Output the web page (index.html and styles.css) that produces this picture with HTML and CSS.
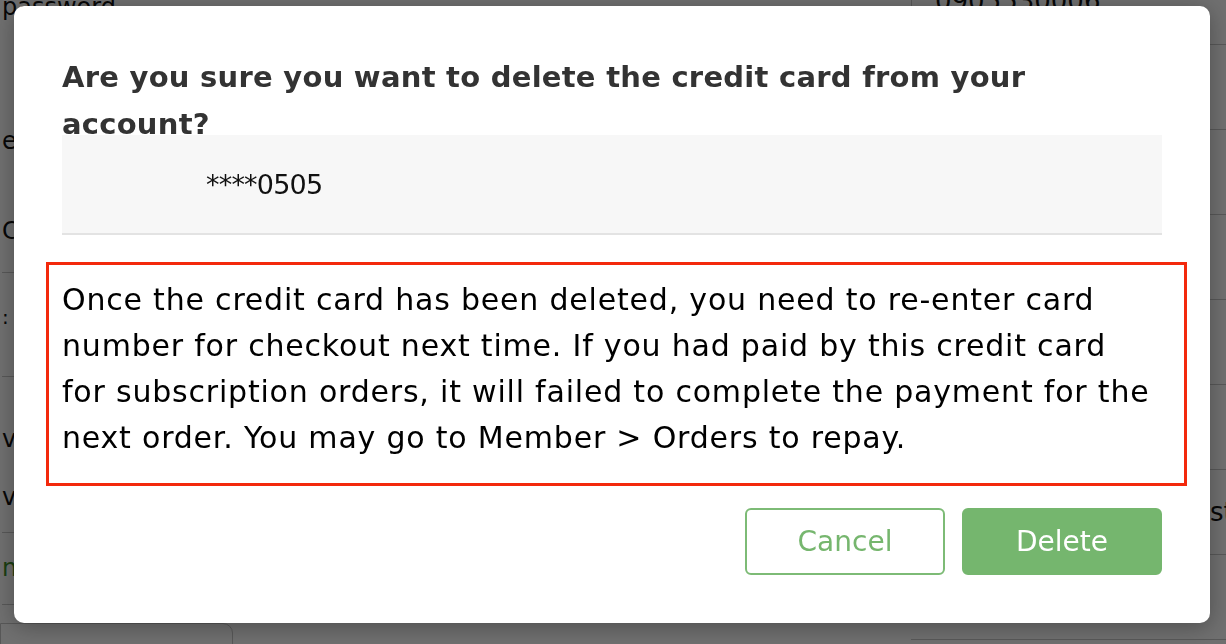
FILE: index.html
```html
<!DOCTYPE html>
<html lang="en">
<head>
<meta charset="utf-8">
<title>Delete credit card</title>
<link rel="stylesheet" href="styles.css">
</head>
<body>
<div class="page">
  <div class="col-left">
    <div class="lblock block-a">
      <div class="ltext">password</div>
      <div class="ltext gap-1">email</div>
      <div class="ltext gap-2">Card</div>
    </div>
    <div class="lblock block-b">
      <div class="ltext small">:</div>
    </div>
    <div class="lblock block-c">
      <div class="ltext">visa</div>
      <div class="ltext gap-3">visa</div>
    </div>
    <div class="lblock block-d">
      <div class="ltext green">new</div>
    </div>
    <div class="lbox"></div>
  </div>
  <div class="col-right">
    <div class="rtop"><span class="phone">0905530006</span></div>
    <div class="rrow"></div>
    <div class="rrow"></div>
    <div class="rrow"></div>
    <div class="rrow"></div>
    <div class="rrow"></div>
    <div class="rrow status-row"><span class="status">status</span></div>
    <div class="rrow"></div>
  </div>
</div>

<div class="overlay">
  <div class="modal">
    <h2 class="modal-title">Are you sure you want to delete the credit card from your account?</h2>
    <div class="card-row">
      <span class="card-num">****0505</span>
    </div>
    <div class="notice">
      <p>Once the credit card has been deleted, you need to re-enter card number for checkout next time. If you had paid by this credit card for subscription orders, it will failed to complete the payment for the next order. You may go to Member &gt; Orders to repay.</p>
    </div>
    <div class="actions">
      <button class="btn btn-outline">Cancel</button>
      <button class="btn btn-primary">Delete</button>
    </div>
  </div>
</div>
</body>
</html>
```

FILE: styles.css
```css
* {
  box-sizing: border-box;
}

html, body {
  margin: 0;
  padding: 0;
}

body {
  width: 1226px;
  height: 644px;
  overflow: hidden;
  background: #ffffff;
  font-family: "DejaVu Sans", "Noto Sans", sans-serif;
  color: #222;
}

/* ---------- background page ---------- */
.page {
  display: flex;
  width: 1226px;
  height: 644px;
  overflow: hidden;
}

.col-left {
  width: 911px;
  flex: none;
  padding-left: 2px;
}

.ltext {
  font-size: 24px;
  line-height: 30px;
  height: 30px;
  color: #111;
  white-space: nowrap;
}

.ltext.small {
  font-size: 20px;
}

.ltext.green {
  color: #3f8f2c;
}

.lblock {
  border-bottom: 1px solid #c8c8c8;
}

.block-a {
  margin-top: -8px;
  padding-bottom: 26px;
}

.gap-1 { margin-top: 104px; }
.gap-2 { margin-top: 60px; }
.gap-3 { margin-top: 28px; }

.block-b {
  padding-top: 29px;
  padding-bottom: 44px;
}

.block-c {
  padding-top: 47px;
  padding-bottom: 20px;
}

.block-d {
  padding-top: 20px;
  padding-bottom: 21px;
}

.lbox {
  margin-top: 18px;
  margin-left: -2px;
  width: 233px;
  height: 40px;
  border: 1px solid #c8c8c8;
  border-top-right-radius: 10px;
}

.col-right {
  flex: 1;
}

.rtop {
  display: flow-root;
  height: 45px;
  border-left: 1px solid #c8c8c8;
  border-bottom: 1px solid #c8c8c8;
  padding-left: 23px;
}

.phone {
  display: block;
  margin-top: -14px;
  font-size: 26px;
  line-height: 30px;
  color: #111;
}

.rrow {
  height: 85px;
  border-bottom: 1px solid #c8c8c8;
}

.status-row {
  display: flex;
  align-items: center;
  padding-left: 299px;
}

.status {
  font-size: 26px;
  color: #111;
  white-space: nowrap;
}

/* ---------- overlay + modal ---------- */
.overlay {
  position: fixed;
  inset: 0;
  background: rgba(0, 0, 0, 0.565);
  display: flex;
  justify-content: center;
  align-items: flex-start;
  padding-top: 6px;
}

.modal {
  width: 1196px;
  margin-right: 2px;
  background: #ffffff;
  border-radius: 10px;
  padding: 48px;
  box-shadow: 0 4px 22px rgba(0, 0, 0, 0.3);
}

.modal-title {
  margin: 0;
  font-size: 29px;
  font-weight: bold;
  line-height: 47px;
  letter-spacing: 0.25px;
  color: #333333;
}

.card-row {
  position: relative;
  margin-top: -13px;
  height: 100px;
  background: #f7f7f7;
  border-bottom: 2px solid #e3e3e3;
  display: flex;
  align-items: center;
  padding-left: 144px;
}

.card-num {
  font-size: 27px;
  letter-spacing: -0.8px;
  color: #111;
}

.notice {
  margin: 27px -25px 0 -16px;
  border: 3px solid #f3290c;
  padding: 12px 28px 22px 13px;
}

.notice p {
  margin: 0;
  font-size: 30px;
  line-height: 46px;
  letter-spacing: 0.8px;
  color: #000;
}

.actions {
  margin-top: 22px;
  display: flex;
  justify-content: flex-end;
  gap: 17px;
}

.btn {
  width: 200px;
  height: 67px;
  border-radius: 6px;
  font-family: "DejaVu Sans", "Noto Sans", sans-serif;
  font-size: 28px;
  cursor: pointer;
  padding: 0;
}

.btn-outline {
  background: #ffffff;
  border: 2px solid #7dbb76;
  color: #76b66e;
}

.btn-primary {
  background: #75b66e;
  border: 2px solid #75b66e;
  color: #ffffff;
}
```
